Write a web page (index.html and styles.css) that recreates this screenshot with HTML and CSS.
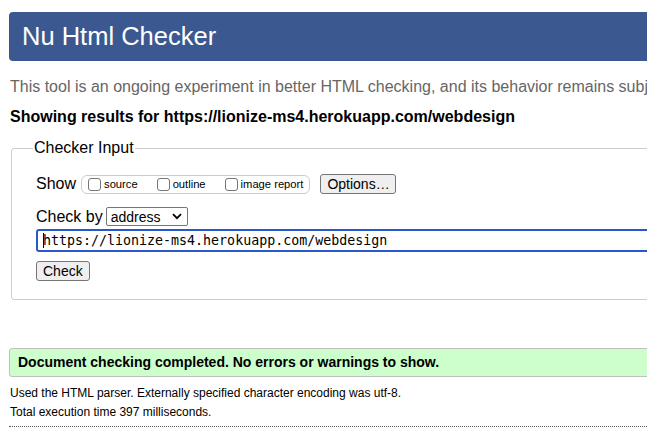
FILE: index.html
```html
<!DOCTYPE html>
<html>
<head>
<meta charset="utf-8">
<link rel="stylesheet" href="styles.css">
</head>
<body>
<div class="page">
  <h1 class="banner">Nu Html Checker</h1>
  <p class="intro">This tool is an ongoing experiment in better HTML checking, and its behavior remains subject to change</p>
  <p class="showing">Showing results for https://lionize-ms4.herokuapp.com/webdesign</p>
  <fieldset class="checker">
    <legend class="legend">Checker Input</legend>
    <div class="row row-show">
      <span class="lbl">Show</span>
      <span class="group">
        <label class="opt"><span class="box"></span>source</label>
        <label class="opt"><span class="box"></span>outline</label>
        <label class="opt"><span class="box"></span>image report</label>
      </span>
      <span class="btn options">Options…</span>
    </div>
    <div class="row row-by">
      <span class="lbl">Check by</span>
      <span class="select">address<svg class="chev" width="10" height="7" viewBox="0 0 10 7"><path d="M1 1.2 L5 5.2 L9 1.2" fill="none" stroke="#000" stroke-width="1.8"/></svg></span>
    </div>
    <div class="url"><span class="caret"></span>https://lionize-ms4.herokuapp.com/webdesign</div>
    <div class="row row-check"><span class="btn">Check</span></div>
  </fieldset>
  <div class="success">Document checking completed. No errors or warnings to show.</div>
  <p class="details">Used the HTML parser. Externally specified character encoding was utf-8.</p>
  <p class="details">Total execution time 397 milliseconds.</p>
  <div class="dots"></div>
</div>
</body>
</html>
```
FILE: styles.css
```css
html, body { margin: 0; padding: 0; overflow: hidden; background: #fff; }
body { font-family: "Liberation Sans", Arial, sans-serif; color: #000; }
.page { width: 820px; padding: 12px 0 0 9px; }
.banner {
  margin: 0; height: 49px; box-sizing: border-box;
  background: #3b5990; color: #fff; border-radius: 4px;
  font-size: 25.5px; font-weight: normal; line-height: 49px; padding-left: 13px;
}
.intro { margin: 17px 0 0 1px; font-size: 16px; color: #666; line-height: 18px; white-space: nowrap; }
.showing { margin: 12px 0 0 1px; font-size: 16px; font-weight: bold; line-height: 18px; }
.checker {
  margin: 13px 0 0 2px; border: 1px solid #ccc; border-radius: 3px;
  padding: 10px 0 18px 24px;
}
.legend { font-size: 16px; padding: 0 1px; margin-left: -3px; }
.row { display: flex; align-items: center; }
.row-show { margin-top: 7px; }
.lbl { font-size: 16px; margin-right: 5px; }
.group {
  display: flex; align-items: center; border: 1px solid #ccc; border-radius: 6px;
  height: 19px; box-sizing: border-box; padding: 0 6px 0 6px; margin-right: 10px;
}
.opt { display: flex; align-items: center; font-size: 11.2px; margin-right: 19px; }
.opt:last-child { margin-right: 0; }
.box { width: 13px; height: 13px; border: 1px solid #767676; border-radius: 3px; margin-right: 3px; box-sizing: border-box; }
.btn {
  font-size: 14px; border: 1px solid #767676; background: #efefef; border-radius: 3px;
  height: 20px; box-sizing: border-box; line-height: 18px; padding: 0 6px;
}
.options { padding: 0 5px 0 6px; }
.row-by { margin-top: 13px; }
.select {
  display: flex; align-items: center; justify-content: space-between;
  width: 82px; height: 19px; box-sizing: border-box; border: 1px solid #767676; border-radius: 2px;
  font-size: 14px; padding: 0 5px 0 4px; margin-left: -2px;
}
.url {
  margin-top: 3px; height: 23px; box-sizing: border-box;
  border: 2px solid #2a57c9; border-radius: 3px;
  font-family: "DejaVu Sans Mono", monospace; font-size: 13.3px; line-height: 19px; padding-left: 5px;
}
.caret { display: inline-block; width: 1px; height: 15px; background: #000; vertical-align: -3px; margin-right: -1px; }
.row-check { margin-top: 9px; }
.success {
  margin-top: 48px; height: 29px; box-sizing: border-box;
  background: #ccffcc; border: 1px solid #c0c0c0; border-radius: 3px;
  font-size: 14px; font-weight: bold; line-height: 27px; padding-left: 8px;
}
.details { margin: 9px 0 0 1px; font-size: 12px; line-height: 14px; }
.details + .details { margin-top: 5px; }
.dots { margin-top: 7px; border-top: 1px dotted #555; }
```
